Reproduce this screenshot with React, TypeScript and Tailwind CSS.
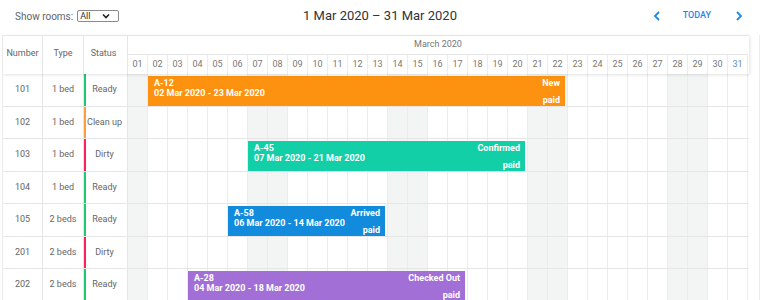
import React from "react";

const FONT = { fontFamily: "Roboto, 'Noto Sans', 'Liberation Sans', sans-serif" };

type Room = { num: string; type: string; status: "Ready" | "Clean up" | "Dirty" };
type Bar = { id: string; dates: string; state: string; start: number; end: number; color: string };

const rooms: Room[] = [
  { num: "101", type: "1 bed", status: "Ready" },
  { num: "102", type: "1 bed", status: "Clean up" },
  { num: "103", type: "1 bed", status: "Dirty" },
  { num: "104", type: "1 bed", status: "Ready" },
  { num: "105", type: "2 beds", status: "Ready" },
  { num: "201", type: "2 beds", status: "Dirty" },
  { num: "202", type: "2 beds", status: "Ready" },
];

const bars: Record<number, Bar> = {
  0: { id: "A-12", dates: "02 Mar 2020 - 23 Mar 2020", state: "New", start: 2, end: 22, color: "#fd9110" },
  2: { id: "A-45", dates: "07 Mar 2020 - 21 Mar 2020", state: "Confirmed", start: 7, end: 20, color: "#12cfa8" },
  4: { id: "A-58", dates: "06 Mar 2020 - 14 Mar 2020", state: "Arrived", start: 6, end: 13, color: "#128bdc" },
  6: { id: "A-28", dates: "04 Mar 2020 - 18 Mar 2020", state: "Checked Out", start: 4, end: 17, color: "#a26fd6" },
};

const weekend = new Set([1, 7, 8, 14, 15, 21, 22, 28, 29]);
const days = Array.from({ length: 31 }, (_, i) => i + 1);

function stripeColor(s: Room["status"]) {
  if (s === "Ready") return "bg-[#1fc872]";
  if (s === "Clean up") return "bg-[#ff9d40]";
  return "bg-[#ff1f5b]";
}

function ChevronDown() {
  return (
    <svg width="8" height="6" viewBox="0 0 8 6" className="pointer-events-none absolute right-[9px] top-[3px]">
      <path d="M1 1.5 L4 4.5 L7 1.5" fill="none" stroke="#222" strokeWidth="1.6" />
    </svg>
  );
}

function Chevron({ dir }: { dir: "left" | "right" }) {
  return (
    <svg width="8" height="10" viewBox="0 0 8 10">
      <path
        d={dir === "left" ? "M6 1 L2 5 L6 9" : "M2 1 L6 5 L2 9"}
        fill="none"
        stroke="#1e88e5"
        strokeWidth="1.8"
      />
    </svg>
  );
}

export default function App() {
  return (
    <div className="relative h-[300px] w-[760px] overflow-hidden bg-white" style={FONT}>
      {/* Toolbar */}
      <div className="grid h-[35px] grid-cols-[1fr_auto_1fr] items-center">
        <div className="flex items-center pl-[15px] pb-[3px]">
          <span className="text-[10px] text-[#5f6368]">Show rooms:</span>
          <div className="relative ml-[4px]">
            <select className="block h-[12px] w-[42px] appearance-none rounded-[2px] border border-[#8a8a8a] bg-white pl-[2px] text-[9px] leading-[10px] text-[#333] outline-none">
              <option>All</option>
            </select>
            <ChevronDown />
          </div>
        </div>
        <div className="pb-[3px] text-[13px] text-[#333]">1 Mar 2020 – 31 Mar 2020</div>
        <div className="flex items-center justify-end pr-[17px] pb-[3px]">
          <Chevron dir="left" />
          <span className="ml-[22px] mr-[24px] text-[9px] font-medium text-[#1e88e5]">TODAY</span>
          <Chevron dir="right" />
        </div>
      </div>

      {/* Scheduler */}
      <div className="ml-[2px] mr-0 flex h-[265px] flex-col border-l border-r border-[#ececec]">
        {/* Header */}
        <div className="relative z-10 flex w-[746px] border-t border-[#e6e6e6] bg-white shadow-[1px_1px_3px_rgba(0,0,0,0.12)]">
          <div className="flex h-[38px] w-[40px] items-center justify-center border-r border-[#e6e6e6] pb-[3px] text-[9px] text-[#666]">
            Number
          </div>
          <div className="flex h-[38px] w-[41px] items-center justify-center border-r border-[#e6e6e6] pb-[3px] text-[9px] text-[#666]">
            Type
          </div>
          <div className="flex h-[38px] w-[44px] items-center justify-center border-r border-[#e6e6e6] pb-[3px] pr-[4px] text-[9px] text-[#666]">
            Status
          </div>
          <div className="flex w-[620px] flex-col">
            <div className="flex h-[19px] items-center justify-center border-b border-[#e6e6e6] text-[9px] text-[#777]">
              March 2020
            </div>
            <div className="flex h-[19px]">
              {days.map((d) => (
                <div
                  key={d}
                  className={`flex w-[20px] items-center justify-center border-r border-[#ececec] text-[9px] ${
                    d === 31 ? "text-[#6a8db4]" : "text-[#777]"
                  }`}
                >
                  {String(d).padStart(2, "0")}
                </div>
              ))}
            </div>
          </div>
        </div>

        {/* Body */}
        <div className="flex w-[746px] flex-col">
          {rooms.map((r, i) => {
            const bar = bars[i];
            return (
              <div key={r.num} className="flex h-[32.5px] border-b border-[#e6e6e6]">
                <div className="flex w-[40px] items-center justify-center border-r border-[#e6e6e6] text-[9px] text-[#666]">
                  {r.num}
                </div>
                <div className="flex w-[41px] items-center justify-center border-r border-[#e6e6e6] text-[9px] text-[#666]">
                  {r.type}
                </div>
                <div className="flex w-[44px] border-r border-[#e6e6e6]">
                  <div className={`w-[2px] ${stripeColor(r.status)}`} />
                  <div className="flex flex-1 items-center justify-center pr-[4px] text-[9px] text-[#666]">
                    {r.status}
                  </div>
                </div>
                <div className="relative flex w-[620px]">
                  {days.map((d) => (
                    <div
                      key={d}
                      className={`w-[20px] border-r border-[#ececec] ${weekend.has(d) ? "bg-[#f3f4f4]" : "bg-white"}`}
                    />
                  ))}
                  {bar && (
                    <div
                      className="absolute top-[2px] flex h-[30px] justify-between pb-[1px] pl-[6px] pr-[5px] pt-[2px] text-[9px] font-bold leading-[10px] text-white"
                      style={{
                        left: (bar.start - 1) * 20,
                        width: (bar.end - bar.start + 1) * 20 - 3,
                        backgroundColor: bar.color,
                      }}
                    >
                      <div className="flex flex-col">
                        <span>{bar.id}</span>
                        <span>{bar.dates}</span>
                      </div>
                      <div className="flex flex-col items-end justify-between">
                        <span>{bar.state}</span>
                        <span>paid</span>
                      </div>
                    </div>
                  )}
                </div>
              </div>
            );
          })}
        </div>
      </div>
    </div>
  );
}
